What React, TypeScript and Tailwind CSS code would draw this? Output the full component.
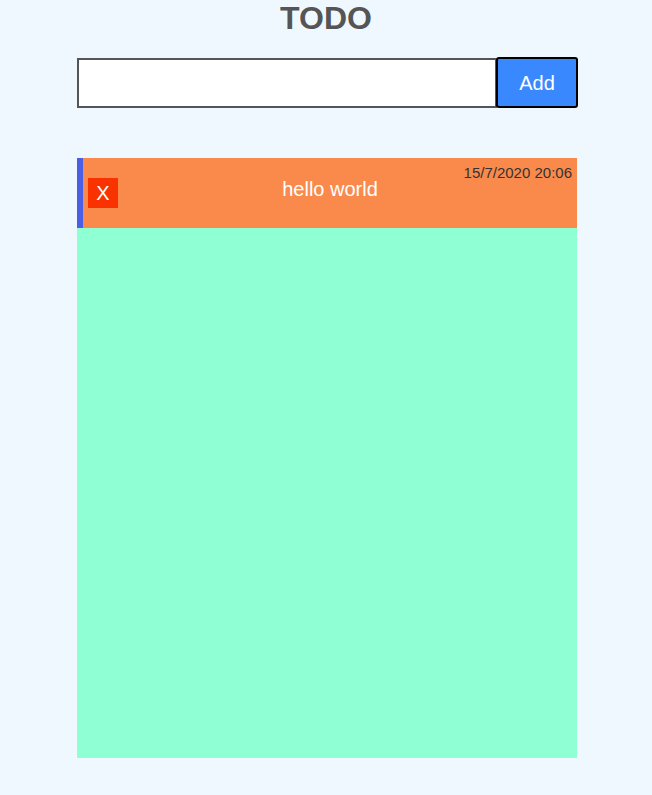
export default function App() {
  return (
    <div className="min-h-[795px] bg-[#f0f8ff] font-['Liberation_Sans',Arial,sans-serif]">
      <h1 className="m-0 text-center text-[32px] leading-[37px] font-bold text-[#555555]">TODO</h1>
      <div className="ml-[77px] w-[501px]">
        <div className="mt-[20px] flex items-end">
          <input
            type="text"
            className="h-[50px] w-[420px] border-2 border-[#555555] bg-white outline-none"
          />
          <button className="-ml-px h-[51px] w-[82px] rounded-[3px] border-2 border-black bg-[#3a88fe] text-[20px] text-white">
            Add
          </button>
        </div>
        <div className="mt-[50px] h-[600px] w-[500px] bg-[#8fffd4]">
          <div className="grid h-[70px] border-l-[6px] border-[#4b5fe5] bg-[#f98a4c]">
            <div className="col-start-1 row-start-1 mt-[6px] mr-[5px] self-start justify-self-end text-[15px] leading-[17px] text-[#333333]">
              15/7/2020 20:06
            </div>
            <button className="col-start-1 row-start-1 mt-[20px] ml-[5px] flex h-[30px] w-[30px] items-center justify-center self-start justify-self-start bg-[#fa3200] text-[20px] leading-none text-white">
              X
            </button>
            <div className="col-start-1 row-start-1 mt-[20px] self-start justify-self-center text-[20px] leading-[23px] text-white">
              hello world
            </div>
          </div>
        </div>
      </div>
    </div>
  );
}
